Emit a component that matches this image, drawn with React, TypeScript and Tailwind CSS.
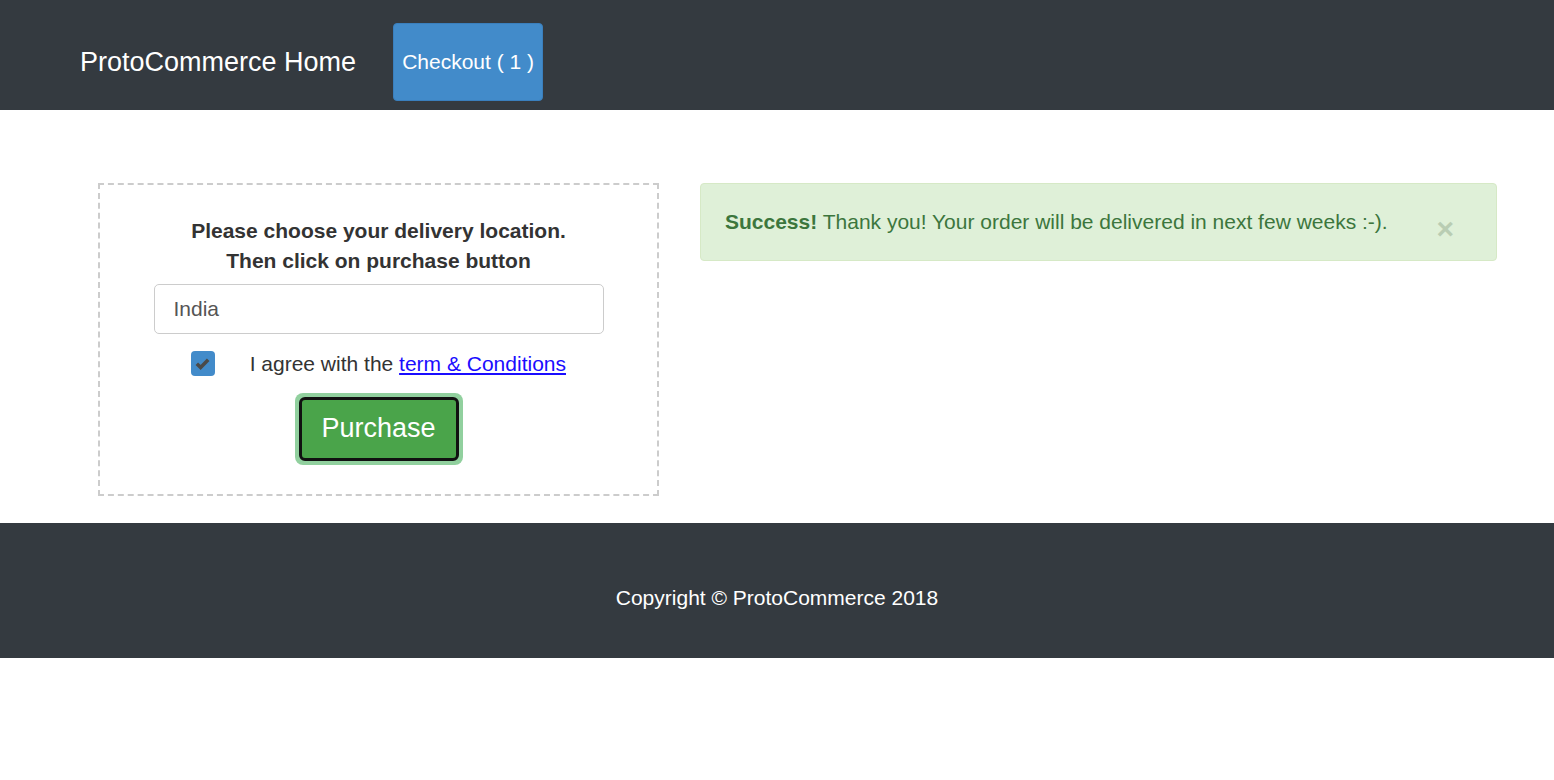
import React from "react";

export default function App() {
  return (
    <div className="min-h-[780px] bg-white" style={{ fontFamily: '"Liberation Sans", Arial, sans-serif' }}>
      <nav className="h-[110px] bg-[#343a40] flex items-center pl-[80px] pt-[14px]">
        <span className="text-white text-[27px] leading-none">ProtoCommerce Home</span>
        <button className="ml-[37px] h-[78px] w-[150px] bg-[#428bca] border border-[#3a7fbd] rounded-[4px] text-white text-[21px] flex items-center justify-center">
          Checkout ( 1 )
        </button>
      </nav>

      <main className="flex items-start pt-[73px] pb-[27px] pl-[98px]">
        <div className="w-[561px] h-[313px] border-2 border-dashed border-[#ccc] flex flex-col items-center pt-[31px]">
          <h4 className="text-[21px] font-bold text-[#333] leading-[30px] text-center">
            Please choose your delivery location.
            <br />
            Then click on purchase button
          </h4>
          <input
            readOnly
            value="India"
            className="mt-[8px] w-[450px] h-[50px] border border-[#ccc] rounded-[5px] pl-[19px] text-[21px] text-[#555] outline-none"
          />
          <div className="mt-[14px] flex items-center w-[375px] pl-0">
            <span className="w-[25px] h-[25px] rounded-[4px] bg-[#428bca] flex items-center justify-center">
              <svg width="15" height="13" viewBox="0 0 15 13">
                <path d="M1.8 6.8 L5.6 10.4 L13.2 2.8" stroke="#4a4a4a" strokeWidth="3.6" fill="none" />
              </svg>
            </span>
            <span className="ml-[35px] text-[21px] text-[#333] whitespace-nowrap">
              I agree with the{" "}
              <a href="#" className="text-[#1a0dff] underline">
                term &amp; Conditions
              </a>
            </span>
          </div>
          <div className="mt-[13px] rounded-[8px] p-[4px] bg-[#91d09e]">
            <button className="w-[160px] h-[64px] bg-[#4aa44a] border-[3px] border-[#111] rounded-[6px] text-white text-[27px] flex items-center justify-center">
              Purchase
            </button>
          </div>
        </div>

        <div className="ml-[41px] w-[797px] h-[78px] bg-[#dff0d8] border border-[#d6e9c6] rounded-[4px] flex items-center pl-[24px] pr-[30px] text-[#3c763d] text-[21px]">
          <span>
            <strong>Success!</strong> Thank you! Your order will be delivered in next few weeks :-).
          </span>
          <span className="ml-auto mr-[12px] mt-[14px] text-[30px] font-bold text-[#b9cdb3] leading-none">×</span>
        </div>
      </main>

      <footer className="h-[135px] bg-[#343a40] flex items-center justify-center">
        <p className="text-white text-[21px] mt-[15px]">Copyright © ProtoCommerce 2018</p>
      </footer>
    </div>
  );
}
